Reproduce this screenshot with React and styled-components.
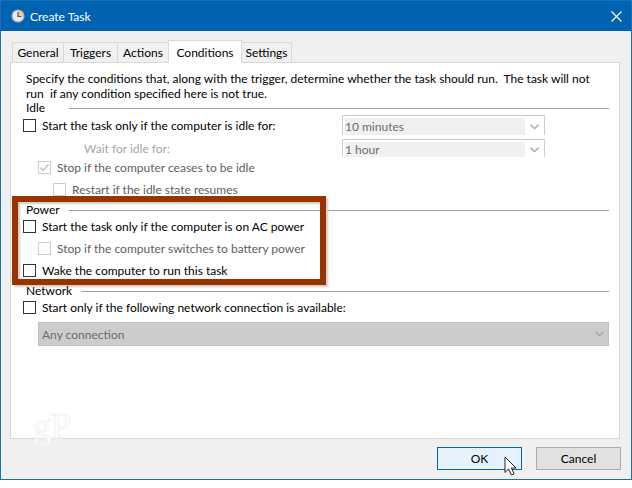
import React, { useState } from 'react'
import styled, { createGlobalStyle } from 'styled-components'

const GlobalStyle = createGlobalStyle`
  * {
    box-sizing: border-box;
  }
  body {
    margin: 0;
    background: #fff;
    color: #000;
    font-family: Lato, 'Open Sans', sans-serif;
    font-size: 12px;
    line-height: 15px;
  }
  button, select, input {
    margin: 0;
    font: inherit;
    color: inherit;
  }
`

const Dialog = styled.main`
  display: flex;
  flex-direction: column;
  min-height: calc(100vh - 8px);
  border: 1px solid #1a6fb8;
  background: #f0f0f0;
`

const TitleBar = styled.header`
  display: flex;
  align-items: center;
  gap: 5px;
  height: 30px;
  padding: 0 9px 0 10px;
  background: #0063b1;
  color: #fff;
  h1 {
    flex: 1;
    margin: 0;
    font-size: 12px;
    font-weight: 400;
  }
  button {
    display: flex;
    padding: 0;
    border: 0;
    background: none;
  }
`

const TabList = styled.div`
  display: flex;
  align-items: flex-end;
  height: 31px;
  padding: 0 11px;
`

const Tab = styled.button`
  width: ${({ $width }) => $width}px;
  height: ${({ $active }) => ($active ? 23 : 20)}px;
  margin-bottom: ${({ $active }) => ($active ? -1 : 0)}px;
  margin-left: ${({ $first }) => ($first ? 0 : -1)}px;
  padding: 0;
  border: 1px solid #d9d9d9;
  border-bottom: 0;
  background: ${({ $active }) => ($active ? '#fff' : '#f0f0f0')};
  position: relative;
  z-index: ${({ $active }) => ($active ? 1 : 0)};
  white-space: nowrap;
`

const Panel = styled.section`
  position: relative;
  flex: 1;
  margin: 0 11px 0 9px;
  padding: 8px 10px 40px 15px;
  border: 1px solid #d9d9d9;
  background: #fff;
`

const Intro = styled.p`
  margin: 0 0 1px;
  white-space: pre-wrap;
`

const Group = styled.section`
  position: relative;
  margin-bottom: 4px;
`

const GroupTitle = styled.h2`
  display: flex;
  align-items: center;
  gap: 9px;
  height: 12px;
  margin: 0;
  font-size: 12px;
  font-weight: 400;
  line-height: 12px;
  span {
    min-width: 34px;
  }
  &::after {
    content: '';
    flex: 1;
    height: 1px;
    background: #a0a0a0;
  }
`

const IdleGrid = styled.div`
  display: grid;
  grid-template-columns: 316px 203px;
  grid-template-rows: 20px 18px;
  row-gap: 4px;
  align-items: center;
  padding-top: 1px;
`

const CheckRow = styled.label`
  display: flex;
  align-items: center;
  gap: 6px;
  height: 21px;
  margin: 0 0 1px ${({ $level }) => $level * 15 - 3}px;
  color: ${({ $disabled }) => ($disabled ? '#606060' : '#000')};
  white-space: nowrap;
  ${IdleGrid} & {
    margin-bottom: 0;
  }
`

const CheckBox = styled.input`
  appearance: none;
  width: 13px;
  height: 13px;
  border: 1px solid #333;
  background: #fff;
  &:disabled {
    border-color: #ccc;
  }
  &:checked {
    background: url("data:image/svg+xml,%3Csvg xmlns='http://www.w3.org/2000/svg' viewBox='0 0 11 11'%3E%3Cpath d='M1.5 5.5 4.2 8.2 9.5 2.5' fill='none' stroke='%23bbb' stroke-width='1.4'/%3E%3C/svg%3E");
  }
`

const WaitLabel = styled.label`
  padding-left: 58px;
  color: #a0a89c;
`

const Combo = styled.div`
  display: flex;
  height: 100%;
  padding: 2px 0 0 2px;
  border: 1px solid #ccc;
  border-bottom: 0;
  select {
    appearance: none;
    width: 180px;
    padding: 0;
    border: 0;
    border-radius: 0;
    background: #f0f0f0;
    color: #6d6d6d;
    opacity: 1;
  }
  svg {
    margin: auto;
  }
`

const WideCombo = styled.div`
  display: flex;
  align-items: center;
  height: 24px;
  margin: 4px 0 0 12px;
  padding-right: 4px;
  border: 1px solid #bfbfbf;
  background: #ccc;
  select {
    appearance: none;
    flex: 1;
    padding: 0 3px;
    border: 0;
    background: none;
    color: #6d6d6d;
    opacity: 1;
  }
`

const Highlight = styled.div`
  position: absolute;
  top: -8px;
  bottom: -4px;
  left: -14px;
  width: 314px;
  border: 6px solid #993300;
  box-shadow: 2px 2px 2px #ccc, inset 2px 2px 2px #ccc;
  pointer-events: none;
`

const Watermark = styled.span`
  position: absolute;
  bottom: -6px;
  left: 22px;
  color: #fff;
  font-family: 'Liberation Serif', serif;
  font-size: 36px;
  line-height: 36px;
  -webkit-text-stroke: 1px #f2f2f2;
`

const Footer = styled.footer`
  display: flex;
  justify-content: flex-end;
  gap: 14px;
  padding: 8px 10px 9px;
`

const PushButton = styled.button`
  position: relative;
  width: 85px;
  height: 23px;
  padding: 0;
  border: 1px solid ${({ $primary }) => ($primary ? '#0067b8' : '#adadad')};
  background: ${({ $primary }) => ($primary ? '#e5f1fb' : '#e1e1e1')};
`

const Pointer = styled.svg`
  position: absolute;
  top: 8px;
  left: 66px;
`

function ClockIcon() {
  return (
    <svg width="14" height="14" viewBox="0 0 14 14" aria-hidden="true">
      <circle cx="7" cy="7" r="6" fill="#e8eaee" stroke="#a9a9ae" strokeWidth="1.2" />
      <path d="M7 7V1.600A5.400 5.400 0 0 1 12.400 7Z" fill="#f3c88b" />
      <path d="M7 3v4.500h3.500" fill="none" stroke="#46566e" strokeWidth="1.2" />
    </svg>
  )
}

function Chevron({ color }) {
  return (
    <svg width="9" height="6" viewBox="0 0 9 6" aria-hidden="true">
      <path d="M.5 .7 4.5 4.7 8.5 .7" fill="none" stroke={color} strokeWidth="1.3" />
    </svg>
  )
}

function Check({ level = 0, disabled, defaultChecked, children }) {
  return (
    <CheckRow $level={level} $disabled={disabled}>
      <CheckBox type="checkbox" disabled={disabled} defaultChecked={defaultChecked} />
      {children}
    </CheckRow>
  )
}

const tabs = [
  { name: 'General', width: 52 },
  { name: 'Triggers', width: 55 },
  { name: 'Actions', width: 52 },
  { name: 'Conditions', width: 74 },
  { name: 'Settings', width: 51 },
]

function App() {
  const [active, setActive] = useState('Conditions')

  return (
    <>
      <GlobalStyle />
      <Dialog>
        <TitleBar>
          <ClockIcon />
          <h1>Create Task</h1>
          <button aria-label="Close">
            <svg width="11" height="11" viewBox="0 0 11 11">
              <path d="M.5 .5l10 10M10.500 .5l-10 10" stroke="#fff" strokeWidth="1.1" />
            </svg>
          </button>
        </TitleBar>
        <TabList role="tablist">
          {tabs.map((tab, i) => (
            <Tab
              key={tab.name}
              role="tab"
              aria-selected={active === tab.name}
              $active={active === tab.name}
              $first={i === 0}
              $width={tab.width}
              onClick={() => setActive(tab.name)}
            >
              {tab.name}
            </Tab>
          ))}
        </TabList>
        <Panel role="tabpanel">
          <Intro>
            {'Specify the conditions that, along with the trigger, determine whether the task should run.  The task will not\nrun  if any condition specified here is not true.'}
          </Intro>
          <Group>
            <GroupTitle><span>Idle</span></GroupTitle>
            <IdleGrid>
              <Check>Start the task only if the computer is idle for:</Check>
              <Combo>
                <select disabled aria-label="Idle time"><option>10 minutes</option></select>
                <Chevron color="#a0a0a0" />
              </Combo>
              <WaitLabel htmlFor="wait">Wait for idle for:</WaitLabel>
              <Combo>
                <select id="wait" disabled><option>1 hour</option></select>
                <Chevron color="#a0a0a0" />
              </Combo>
            </IdleGrid>
            <Check level={1} disabled defaultChecked>Stop if the computer ceases to be idle</Check>
            <Check level={2} disabled>Restart if the idle state resumes</Check>
          </Group>
          <Group>
            <GroupTitle><span>Power</span></GroupTitle>
            <Check>Start the task only if the computer is on AC power</Check>
            <Check level={1} disabled>Stop if the computer switches to battery power</Check>
            <Check>Wake the computer to run this task</Check>
            <Highlight />
          </Group>
          <Group>
            <GroupTitle><span>Network</span></GroupTitle>
            <Check>Start only if the following network connection is available:</Check>
            <WideCombo>
              <select disabled aria-label="Network connection"><option>Any connection</option></select>
              <Chevron color="#a0a0a0" />
            </WideCombo>
          </Group>
          <Watermark>gP</Watermark>
        </Panel>
        <Footer>
          <PushButton $primary>
            OK
            <Pointer width="13" height="20" viewBox="0 0 13 20" aria-hidden="true">
              <path d="M1 1v15.500l3.600-3.500 2.800 6 2.700-1.200-2.700-5.800h4.600Z" fill="#fff" stroke="#222" />
            </Pointer>
          </PushButton>
          <PushButton>Cancel</PushButton>
        </Footer>
      </Dialog>
    </>
  )
}

export default App
